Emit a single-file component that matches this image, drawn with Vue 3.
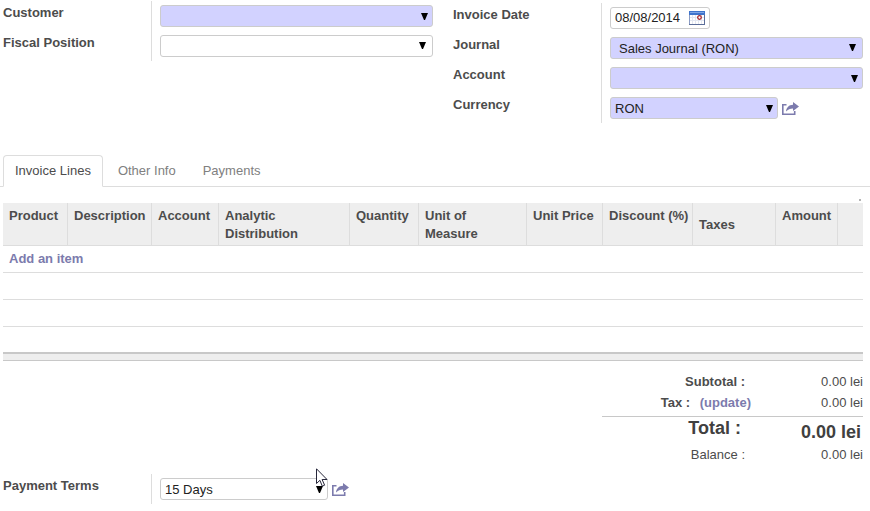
<template>
  <main class="invoice">
    <div class="groups">
      <div class="group">
        <div class="row" v-for="field in leftFields" :key="field.id">
          <label class="label" :for="field.id">{{ field.label }}</label>
          <div class="field">
            <div class="select" :class="field.style">
              <select :id="field.id" v-model="field.value">
                <option :value="field.value">{{ field.value }}</option>
              </select>
              <svg class="caret" viewBox="0 0 7 7"><path d="M0 0h7L4 7H3z" /></svg>
            </div>
          </div>
        </div>
      </div>

      <div class="group right">
        <div class="row">
          <label class="label" for="date">Invoice Date</label>
          <div class="field">
            <div class="date">
              <input id="date" type="text" v-model="invoiceDate" />
              <button type="button" aria-label="Open calendar">
                <svg width="16" height="14" viewBox="0 0 16 14">
                  <rect width="16" height="14" fill="#8b9cc4" />
                  <rect width="16" height="4" fill="#3f74cb" />
                  <rect x="1" y="1" width="14" height="1" fill="#7fa6e6" />
                  <rect x="1" y="4" width="14" height="9" fill="#fff" />
                  <path
                    d="M3.5 4v9M6.5 4v9M9.5 4v9M12.5 4v9M1 6.5h14M1 9.5h14"
                    stroke="#e3e7f1"
                  />
                  <circle cx="10.5" cy="6.5" r="1.8" fill="#fff" stroke="#a8262b" stroke-width="1.3" />
                  <path d="M0 13.5h16M15.5 4v10" stroke="#5b6d99" />
                </svg>
              </button>
            </div>
          </div>
        </div>
        <div class="row" v-for="field in rightFields" :key="field.id">
          <label class="label" :for="field.id">{{ field.label }}</label>
          <div class="field">
            <div class="select" :class="field.style">
              <select :id="field.id" v-model="field.value">
                <option :value="field.value">{{ field.value }}</option>
              </select>
              <svg class="caret" viewBox="0 0 7 7"><path d="M0 0h7L4 7H3z" /></svg>
            </div>
            <button v-if="field.open" type="button" class="open" aria-label="Open record">
              <svg width="17" height="13" viewBox="0 0 17 13">
                <path d="M4.5 2.8H.8v9.400h11.900V9" fill="none" stroke="#7c7bad" stroke-width="1.600" />
                <path d="M11 0l6 4.500L11 9V6.500C8 6.500 6 7.500 4 9.500 4.300 5.500 7 2.700 11 2.700z" fill="#7c7bad" />
              </svg>
            </button>
          </div>
        </div>
      </div>
    </div>

    <nav class="tabs">
      <a
        v-for="tab in tabs"
        :key="tab"
        href="#"
        :class="{ active: tab === activeTab }"
        @click.prevent="activeTab = tab"
        >{{ tab }}</a
      >
    </nav>

    <section class="lines">
      <div class="pager"><span class="dot"></span></div>
      <table>
        <colgroup>
          <col v-for="(column, index) in columns" :key="index" :style="{ width: column.width + 'px' }" />
        </colgroup>
        <thead>
          <tr>
            <th
              v-for="(column, index) in columns"
              :key="index"
              :class="{ middle: column.name === 'Taxes', wrap: column.wrap }"
            >
              {{ column.name }}
            </th>
          </tr>
        </thead>
        <tbody>
          <tr>
            <td :colspan="columns.length"><a href="#" @click.prevent>Add an item</a></td>
          </tr>
          <tr v-for="n in 3" :key="n">
            <td :colspan="columns.length"></td>
          </tr>
        </tbody>
        <tfoot>
          <tr>
            <td :colspan="columns.length"></td>
          </tr>
        </tfoot>
      </table>
    </section>

    <dl class="totals">
      <dt>Subtotal :</dt>
      <dd>0.00 lei</dd>
      <dt class="tax">Tax : <a href="#" @click.prevent>(update)</a></dt>
      <dd>0.00 lei</dd>
      <dt class="total">Total :</dt>
      <dd class="total">0.00 lei</dd>
      <dt class="balance">Balance :</dt>
      <dd>0.00 lei</dd>
    </dl>

    <div class="row">
      <label class="label" for="terms">Payment Terms</label>
      <div class="field">
        <div class="select short">
          <select id="terms" v-model="paymentTerms">
            <option>15 Days</option>
          </select>
          <svg class="caret" viewBox="0 0 7 7"><path d="M0 0h7L4 7H3z" /></svg>
          <svg class="pointer" width="12" height="19" viewBox="0 0 12 19">
            <path
              d="M.5.8v14.700l3.400-3.200 2.400 5.900 2.300-1-2.500-5.700h4.900z"
              fill="#fff"
              stroke="#26263a"
            />
          </svg>
        </div>
        <button type="button" class="open" aria-label="Open payment terms">
          <svg width="17" height="13" viewBox="0 0 17 13">
            <path d="M4.5 2.8H.8v9.400h11.900V9" fill="none" stroke="#7c7bad" stroke-width="1.600" />
            <path d="M11 0l6 4.500L11 9V6.500C8 6.500 6 7.500 4 9.500 4.300 5.500 7 2.700 11 2.700z" fill="#7c7bad" />
          </svg>
        </button>
      </div>
    </div>
  </main>
</template>

<script setup>
import { ref } from "vue";

const leftFields = ref([
  { id: "customer", label: "Customer", value: "", style: "required" },
  { id: "fiscal", label: "Fiscal Position", value: "", style: "inset" },
]);

const rightFields = ref([
  {
    id: "journal",
    label: "Journal",
    value: "Sales Journal (RON)",
    style: "required inset",
  },
  { id: "account", label: "Account", value: "", style: "required" },
  {
    id: "currency",
    label: "Currency",
    value: "RON",
    style: "required short",
    open: true,
  },
]);

const invoiceDate = ref("08/08/2014");
const paymentTerms = ref("15 Days");

const tabs = ["Invoice Lines", "Other Info", "Payments"];
const activeTab = ref("Invoice Lines");

const columns = [
  { name: "Product", width: 65 },
  { name: "Description", width: 84 },
  { name: "Account", width: 67 },
  { name: "Analytic Distribution", width: 131, wrap: true },
  { name: "Quantity", width: 69 },
  { name: "Unit of Measure", width: 108, wrap: true },
  { name: "Unit Price", width: 76 },
  { name: "Discount (%)", width: 90 },
  { name: "Taxes", width: 83 },
  { name: "Amount", width: 62 },
  { name: "", width: 25 },
];
</script>

<style>
body {
  margin: 0;
  background: #fff;
}
</style>

<style scoped>
.invoice {
  padding-top: 1px;
  font-family: "Liberation Sans", Arial, sans-serif;
  font-size: 13px;
  line-height: 18px;
  color: #4c4c4c;
}

.invoice * {
  box-sizing: border-box;
}

.groups {
  display: grid;
  grid-template-columns: 433fr 410fr;
  align-items: start;
  gap: 20px;
  padding-right: 7px;
}

.groups .right {
  padding-top: 2px;
}

.row {
  display: flex;
  height: 30px;
}

.label {
  flex: none;
  width: 151px;
  padding: 3px 0 0 3px;
  font-weight: bold;
}

.groups .right .label {
  width: 148px;
  padding-left: 0;
}

.field {
  display: flex;
  flex: 1;
  align-items: flex-start;
  gap: 4px;
  padding: 4px 0 0 8px;
  border-left: 1px solid #ddd;
}

.select {
  position: relative;
  flex: 1;
  height: 22px;
}

.select.short {
  flex: none;
  width: 168px;
}

select {
  display: block;
  appearance: none;
  width: 100%;
  height: 22px;
  margin: 0;
  padding: 1px 16px 0 4px;
  border: 1px solid #ccc;
  border-radius: 3px;
  background: #fff;
  color: #222;
  font: inherit;
}

.required select {
  background: #d2d2ff;
}

.inset select {
  padding: 2px 16px 0 8px;
}

.caret {
  position: absolute;
  top: 8px;
  right: 5px;
  width: 7px;
  height: 7px;
  fill: #000;
  pointer-events: none;
}

.inset .caret {
  top: 7px;
  right: 7px;
}

.pointer {
  position: absolute;
  top: -10px;
  right: 0;
  pointer-events: none;
}

button {
  margin: 0;
  padding: 0;
  border: 0;
  background: none;
}

button svg {
  display: block;
}

.open {
  padding-top: 5px;
}

.date {
  display: flex;
  align-items: center;
  width: 100px;
  height: 22px;
  padding: 0 4px;
  border: 1px solid #ccc;
  border-radius: 3px;
}

.date input {
  flex: 1;
  min-width: 0;
  padding: 0;
  border: 0;
  outline: 0;
  background: none;
  color: #222;
  font: inherit;
}

.tabs {
  display: flex;
  gap: 3px;
  margin-top: 32px;
  padding-left: 3px;
  border-bottom: 1px solid #ddd;
}

.tabs a {
  margin-bottom: -1px;
  padding: 6px 11px;
  border: 1px solid transparent;
  border-radius: 4px 4px 0 0;
  color: #808080;
  text-decoration: none;
}

.tabs .active {
  border-color: #ddd;
  border-bottom-color: #fff;
  background: #fff;
  color: #4c4c4c;
}

.lines {
  padding: 0 7px 0 3px;
}

.pager {
  display: flex;
  justify-content: flex-end;
  align-items: flex-end;
  height: 16px;
  padding: 0 2px 2px 0;
}

.dot {
  width: 2px;
  height: 2px;
  background: #b4b4b4;
}

table {
  width: 100%;
  border-spacing: 0;
  table-layout: fixed;
}

th {
  height: 43px;
  padding: 4px 4px 2px 6px;
  border-right: 1px solid #ddd;
  border-bottom: 1px solid #ddd;
  background: #eee;
  text-align: left;
  vertical-align: top;
  white-space: nowrap;
}

th.wrap {
  white-space: normal;
}

th:last-child {
  border-right: 0;
}

th.middle {
  vertical-align: middle;
}

td {
  height: 27px;
  padding: 0 6px;
  border-bottom: 1px solid #ddd;
}

tbody tr:last-child td {
  height: 25px;
  border-bottom: 0;
}

tfoot td {
  height: 9px;
  padding: 0;
  border-top: 2px solid #c8c8c8;
  border-bottom: 1px solid #c8c8c8;
  background: #eee;
}

td a,
dt a {
  color: #7c7bad;
  font-weight: bold;
  text-decoration: none;
}

.totals {
  display: grid;
  grid-template-columns: 149px 112px;
  grid-template-rows: 21px 23px 29px 21px;
  justify-content: end;
  margin: 11px 7px 8px 0;
  line-height: 20px;
}

dt {
  padding-right: 6px;
  font-weight: bold;
  text-align: right;
}

dd {
  margin: 0;
  text-align: right;
}

.tax {
  padding-right: 0;
}

.tax a {
  margin-left: 6px;
}

.total {
  border-top: 1px solid #c8c8c8;
  color: #404040;
  font-size: 18px;
  font-weight: bold;
}

dt.total {
  padding: 1px 10px 0 0;
}

dd.total {
  padding: 5px 2px 0 0;
}

.balance {
  font-weight: normal;
}
</style>
